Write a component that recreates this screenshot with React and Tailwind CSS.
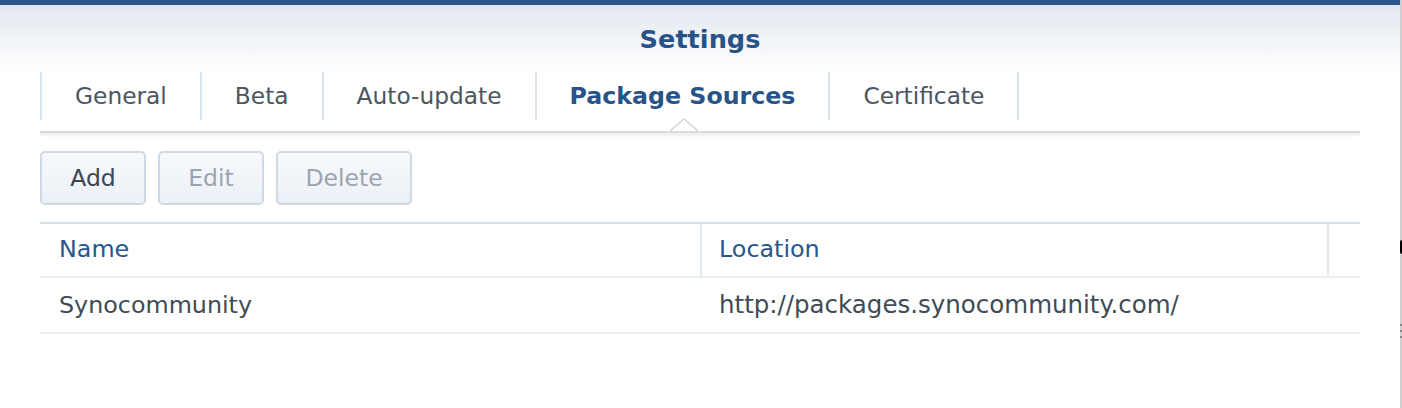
const tabs = ['General', 'Beta', 'Auto-update', 'Package Sources', 'Certificate']
const active = 'Package Sources'

function Tab({ label, last }) {
  const on = label === active
  return (
    <div
      className={`flex items-center h-[48px] px-[33px] pt-[1px] border-l-2 border-[#dbe3ec] ${last ? 'border-r-2' : ''} ${
        on ? 'font-bold text-[23.7px] text-[#275389]' : 'text-[23.3px] text-[#4c5661]'
      }`}
    >
      {label}
    </div>
  )
}

function Button({ children, disabled, width }) {
  return (
    <button
      className={`${width} h-[54px] pt-[2px] rounded-[5px] border-2 border-[#cfd9e3] bg-gradient-to-b from-[#f7f9fc] to-[#ebf1f7] text-[23.5px] ${
        disabled ? 'text-[#9ba5b0]' : 'text-[#3d4650]'
      }`}
    >
      {children}
    </button>
  )
}

export default function App() {
  return (
    <div
      className="w-[1402px] h-[408px] bg-white flex overflow-hidden"
      style={{ fontFamily: '"DejaVu Sans", Verdana, sans-serif' }}
    >
      <div className="w-[1400px] flex flex-col">
        <div className="h-[5px] bg-[#2a5788]" />
        <div className="h-[67px] bg-gradient-to-b from-[#e2e8f0] to-white flex items-center justify-center">
          <h1 className="text-[25.6px] font-bold text-[#275389] mt-[2px]">Settings</h1>
        </div>

        <div className="mx-[40px] w-[1320px]">
          <div className="flex">
            {tabs.map((t, i) => (
              <Tab key={t} label={t} last={i === tabs.length - 1} />
            ))}
          </div>

          <div className="relative h-[11px]">
            {/* notch under active tab */}
            <svg className="absolute left-[630px] top-[-2px]" width="28" height="14" viewBox="0 0 28 14">
              <path d="M0 13 L14 1 L28 13" fill="white" stroke="#d2d6db" strokeWidth="1.5" />
            </svg>
          </div>
          <div className="h-[2px] bg-[#d8dce1] shadow-[0_2px_3px_rgba(0,0,0,0.12)]" />

          <div className="flex gap-[12px] mt-[18px]">
            <Button width="w-[106px]">Add</Button>
            <Button width="w-[106px]" disabled>Edit</Button>
            <Button width="w-[136px]" disabled>Delete</Button>
          </div>

          <div className="mt-[17px] border-t-2 border-[#d6e0ea] text-[23.8px]">
            <div className="flex h-[54px] border-b-2 border-[#e8eef4] text-[#28558b]">
              <div className="w-[660px] flex items-center px-[19px]">Name</div>
              <div className="w-[627px] flex items-center px-[17px] border-l-2 border-[#e0e8f1]">Location</div>
              <div className="flex-1 border-l-2 border-[#e0e8f1]" />
            </div>
            <div className="flex h-[56px] pt-[1px] border-b-2 border-[#e8eef4] text-[#414b55]">
              <div className="w-[660px] flex items-center px-[19px]">Synocommunity</div>
              <div className="flex-1 flex items-center px-[19px] text-[24.5px]">http://packages.synocommunity.com/</div>
            </div>
          </div>
        </div>
      </div>

      {/* window edge */}
      <div className="relative w-[2px] bg-[#cfcfcf]">
        <div className="absolute top-[240px] left-0 w-[2px] h-[14px] bg-black rounded-l-sm" />
        <div className="absolute top-[324px] left-0 w-[2px] h-[2px] bg-[#8a8a8a]" />
        <div className="absolute top-[330px] left-0 w-[2px] h-[2px] bg-[#8a8a8a]" />
        <div className="absolute top-[336px] left-0 w-[2px] h-[2px] bg-[#8a8a8a]" />
      </div>
    </div>
  )
}
